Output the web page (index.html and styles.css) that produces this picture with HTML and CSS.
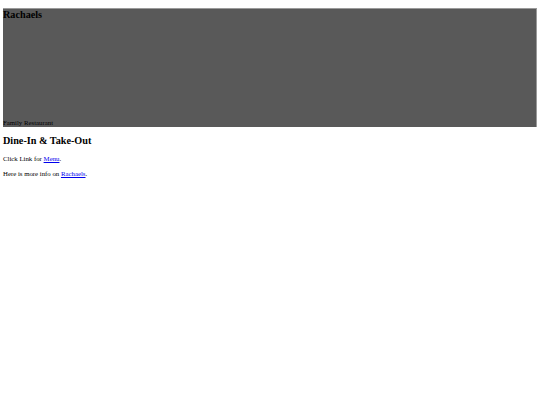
FILE: index.html
```html
<!DOCTYPE html>
<html>
<head>
<meta charset="utf-8">
<link rel="stylesheet" href="styles.css">
</head>
<body>
<div class="banner">
  <h1 class="title">Rachaels</h1>
  <p class="sub">Family Restaurant</p>
</div>
<h2 class="heading">Dine-In &amp; Take-Out</h2>
<p class="line">Click Link for <a href="#">Menu</a>.</p>
<p class="line">Here is more info on <a href="#">Rachaels</a>.</p>
</body>
</html>
```
FILE: styles.css
```css
html, body { margin: 0; padding: 0; background: #fff; }
body {
  padding: 8px 3px 0 3px;
  font-family: "Liberation Serif", "Times New Roman", serif;
  color: #000;
}
.banner {
  width: 534px;
  height: 119px;
  box-sizing: border-box;
  background: #595959;
  border-top: 1px solid #9a9a9a;
  border-right: 1px solid #9a9a9a;
  display: flex;
  flex-direction: column;
  justify-content: space-between;
}
.title {
  margin: 0;
  font-size: 10.2px;
  font-weight: bold;
  line-height: 11px;
}
.sub {
  margin: 0;
  font-size: 6.8px;
  line-height: 8px;
}
.heading {
  margin: 8px 0 8px;
  font-size: 10.2px;
  font-weight: bold;
  line-height: 12px;
}
.line {
  margin: 0 0 7px;
  font-size: 6.8px;
  line-height: 8px;
}
a { color: #00e; text-decoration: underline; }
```
